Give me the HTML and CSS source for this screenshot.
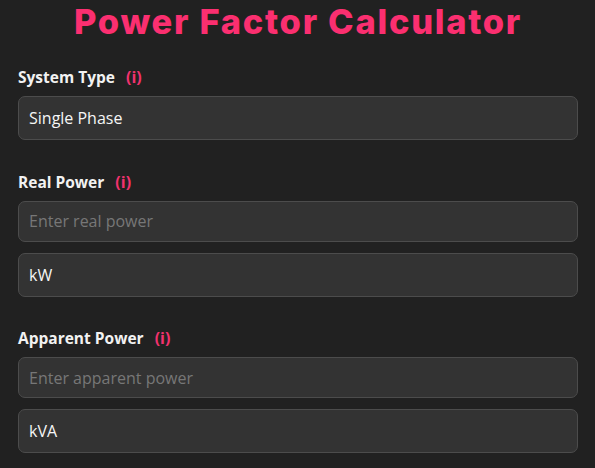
FILE: index.html
```html
<!DOCTYPE html>
<html>
<head>
<meta charset="utf-8">
<link rel="stylesheet" href="styles.css">
</head>
<body>
<div class="calc">
  <h1 class="title">Power Factor Calculator</h1>
  <div class="group">
    <div class="label">System Type <span class="info">(i)</span></div>
    <div class="field select">Single Phase</div>
  </div>
  <div class="group">
    <div class="label">Real Power <span class="info">(i)</span></div>
    <div class="field input">Enter real power</div>
    <div class="field select">kW</div>
  </div>
  <div class="group">
    <div class="label">Apparent Power <span class="info">(i)</span></div>
    <div class="field input">Enter apparent power</div>
    <div class="field select">kVA</div>
  </div>
</div>
</body>
</html>
```
FILE: styles.css
```css
html, body {
  margin: 0;
  padding: 0;
  background: #212121;
}
body {
  font-family: "Open Sans", "Noto Sans", sans-serif;
  color: #f2f2f2;
}
.calc {
  padding: 0 17px 0 18px;
}
.title {
  margin: 0;
  text-align: center;
  font-family: Inter, sans-serif;
  font-weight: 800;
  font-size: 34.5px;
  line-height: 44px;
  color: #fb2f70;
  letter-spacing: 1.7px;
}
.group {
  display: flex;
  flex-direction: column;
  margin-top: 23px;
}
.group + .group {
  margin-top: 31.5px;
}
.label {
  font-size: 15.5px;
  font-weight: 700;
  line-height: 20px;
  margin-bottom: 9px;
}
.info {
  color: #f0326e;
  font-size: 16px;
  margin-left: 7px;
}
.field {
  box-sizing: border-box;
  background: #333333;
  border: 1px solid #4c4c4c;
  border-radius: 7px;
  padding: 0 10px;
  font-size: 16px;
  display: flex;
  align-items: center;
}
.field + .field {
  margin-top: 11px;
}
.select {
  height: 44px;
  color: #f6f6f6;
}
.input {
  height: 41px;
  color: #777777;
}
```
